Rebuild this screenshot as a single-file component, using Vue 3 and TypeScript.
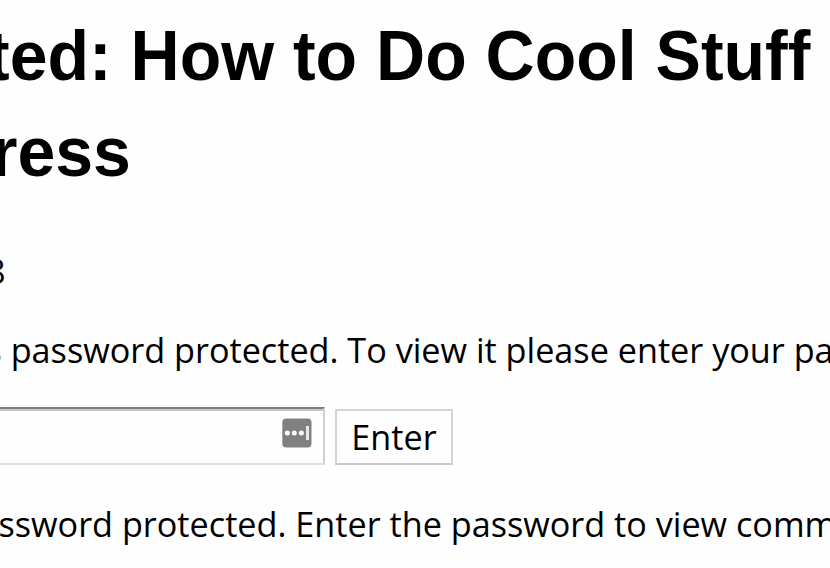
<script setup lang="ts">
const title: string[] = ['ted: How to Do Cool Stuff', 'ress']
</script>

<template>
  <main class="page">
    <h1 class="title"><span v-for="line in title" :key="line" class="line">{{ line }}</span></h1>
    <p class="date"><span>8</span></p>
    <p class="intro"><span>s password protected. To view it please enter your password</span></p>
    <form class="form" @submit.prevent>
      <div class="field">
        <svg class="key" width="30" height="30" viewBox="0 0 30 30">
          <rect x="0.3" y="0.6" width="29.2" height="29" rx="4" fill="#808080" />
          <circle cx="5.3" cy="15" r="2.5" fill="#fff" />
          <circle cx="12.3" cy="15" r="2.5" fill="#fff" />
          <circle cx="19.4" cy="15" r="2.5" fill="#fff" />
          <rect x="24" y="8" width="3" height="14" fill="#e8e8e8" />
        </svg>
      </div>
      <button class="enter">Enter</button>
    </form>
    <p class="note"><span>ssword protected. Enter the password to view comments.</span></p>
  </main>
</template>

<style>
body { background: #fefefe; }
</style>
<style scoped>
.page { width: 830px; height: 568px; overflow: hidden; color: #000; font-family: "Open Sans", sans-serif; font-size: 34.2px; }
.title { margin: 0; padding-top: 7px; font: bold 68px/96px "Liberation Sans", Arial, sans-serif; }
.line { display: block; white-space: nowrap; margin-left: -13px; transform: scaleY(1.04); }
.line:last-child { margin-left: -9px; }
p { margin: 0; height: 48px; line-height: 48px; white-space: nowrap; }
.date { margin-top: 48px; }
.date span { margin-left: -14px; }
.intro { margin-top: 31px; }
.intro span { margin-left: -14.5px; }
.form { display: flex; gap: 10px; margin-top: 33px; height: 58px; }
.field { box-sizing: border-box; width: 325px; border: 2px solid #d0d0d0; border-left: 0; border-top: 2px solid #808080; box-shadow: inset 0 2px #c4c4c4; border-bottom-color: #e0e0e0; display: flex; justify-content: flex-end; padding: 9px 11px; }
.enter { box-sizing: border-box; width: 118px; height: 56px; margin-top: 2px; padding: 0 0 2px; border: 2px solid #d4d4d4; border-bottom-color: #c8c8c8; background: #fefefe; color: #000; font: 34.2px "Open Sans", sans-serif; }
.note { margin-top: 35px; }
.note span { margin-left: -1.5px; }
</style>
